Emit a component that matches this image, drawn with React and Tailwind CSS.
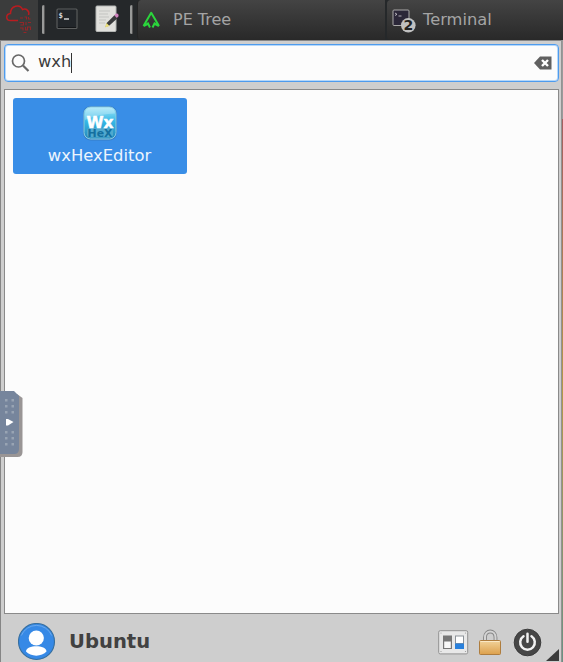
const dejavu = "font-['DejaVu_Sans',sans-serif]";

function MenuLogo() {
  return (
    <svg className="h-10 w-[38px] shrink-0" viewBox="0 0 38 40" fill="none" stroke="#b91c20" strokeWidth="1.500">
      <path d="M18 20.500h-7.500c-5 0-5-6.500 0-7 0-8 9.500-10 12-4 4-1.500 7.500 2 6 5.500" />
      <g strokeWidth="1.100" opacity=".7">
        <path d="M20 18h3M24.500 17h2v2.500M28.500 17v2h2M19.500 22.500h4v2.500h-3M26 22v3M28 22.500h3M20 28h3v2.500M25.500 27v3h2v-3h3v3M23.500 32.500h3" />
      </g>
    </svg>
  );
}

function TerminalIcon() {
  return (
    <svg className="size-[22px]" viewBox="0 0 22 22">
      <rect x="1" y="1" width="20" height="19.500" rx="1" fill="#22262a" stroke="#5d5f5f" strokeWidth="1.100" />
      <path d="M2 19.500h18" stroke="#151719" />
      <text x="2.500" y="9.500" fontSize="7.500" fontWeight="bold" fontFamily="DejaVu Sans Mono, monospace" fill="#d8d8d8">$</text>
      <path d="M8 11h5" stroke="#eee" strokeWidth="1.300" />
    </svg>
  );
}

function NotesIcon() {
  return (
    <svg className="h-[28px] w-[25px]" viewBox="0 0 25 28">
      <rect x="1" y="1" width="20" height="25.500" rx="1" fill="#e0e0dc" stroke="#b4b6b4" />
      <path d="M4 6h11M4 9h9M4 12h10M4 15h7M4 18h6" stroke="#c3c4c1" strokeWidth="1" />
      <path d="M10.500 22l1.200-4 8-8 3 3-8.300 7.500z" fill="#3b3c3d" />
      <path d="M10 22.500l1.500-4.500 3 3z" fill="#ede17a" />
      <path d="M19.300 10.300l1.500-1.500c2-.8 3.500 1 2.500 2.700l-1.500 1.500z" fill="#cf83bd" />
    </svg>
  );
}

function TreeIcon() {
  return (
    <svg className="h-[18px] w-[19px]" viewBox="0 0 19 18" fill="none" stroke="#2bd63c" strokeWidth="2" strokeLinejoin="round">
      <path d="M1.500 15L9.200 1.800 17 15M5.500 11.500l2.500 5M13 11.500l-2.500 5M1.500 15l4-2M17 15l-4-2" />
    </svg>
  );
}

function GroupedTerminalIcon() {
  return (
    <svg className="h-6 w-[25px]" viewBox="0 0 25 24">
      <rect x="1" y="1" width="16" height="15.500" rx="1" fill="#2b2738" stroke="#aaa9a8" strokeWidth="1" />
      <path d="M3 4l2 1.300L3 6.500M6.500 7h3" stroke="#d5d2d8" fill="none" strokeWidth=".8" />
      <circle cx="16.300" cy="16.300" r="7.300" fill="#c0c0c0" />
      <text x="16.300" y="21.300" textAnchor="middle" fontSize="14" fontWeight="bold" fontFamily="DejaVu Sans, sans-serif" fill="#222">2</text>
    </svg>
  );
}

function WxIcon() {
  return (
    <svg className="size-[36px]" viewBox="0 0 36 36">
      <defs>
        <linearGradient id="wxfill" x1="0" y1="0" x2="0" y2="1">
          <stop offset="0" stopColor="#a3e6f8" />
          <stop offset=".45" stopColor="#36b8e6" />
          <stop offset="1" stopColor="#2788b8" />
        </linearGradient>
      </defs>
      <rect x="1" y="1" width="34" height="34.500" rx="8" fill="#356ca5" opacity=".5" />
      <rect x="2" y="2" width="32" height="32" rx="6.500" fill="url(#wxfill)" stroke="#8acbe2" strokeWidth="1" />
      <path d="M3 9q0-6.500 6-6.500h18q6 0 6 6C24 9 14 10 3 15z" fill="#fff" opacity=".25" />
      <rect x="5" y="23" width="26" height="9.500" rx="3" fill="#50a9cf" />
      <text x="4.500" y="22.500" textLength="27" lengthAdjust="spacingAndGlyphs" fontSize="16" fontWeight="bold" fontFamily="DejaVu Sans, sans-serif" fill="#fff" stroke="#fff" strokeWidth=".5">Wx</text>
      <text x="5.500" y="32" textLength="25" lengthAdjust="spacingAndGlyphs" fontSize="10.500" fontWeight="bold" fontFamily="DejaVu Sans, sans-serif" fill="#146f9f">HeX</text>
    </svg>
  );
}

function Avatar() {
  return (
    <svg className="size-[38px]" viewBox="0 0 38 38">
      <circle cx="18.500" cy="18.500" r="18" fill="#3689e6" stroke="#376f9f" strokeWidth="1.100" />
      <path d="M3.300 12.500a16.500 16.500 0 0 1 30.400 0" fill="none" stroke="#77b1ee" strokeWidth=".8" />
      <circle cx="18.300" cy="15" r="7.600" fill="#fff" />
      <path d="M8 28.500c0-7 20.500-7 20.500 0-4.500 5.500-16 5.500-20.500 0z" fill="#fff" />
    </svg>
  );
}

function SettingsIcon() {
  return (
    <svg className="h-[25px] w-[31px]" viewBox="0 0 31 25">
      <rect x=".7" y=".7" width="29" height="23.200" rx="1.500" fill="#e8e8e8" stroke="#929292" />
      <g fill="#999"><circle cx="3" cy="3" r=".6" /><circle cx="27.500" cy="3" r=".6" /><circle cx="3" cy="21.500" r=".6" /><circle cx="27.500" cy="21.500" r=".6" /></g>
      <rect x="5" y="5.500" width="9" height="13.500" fill="#777" />
      <rect x="6.200" y="11.500" width="6.600" height="6.500" fill="#f9f9f9" />
      <rect x="17" y="5.500" width="9" height="13.500" fill="#8c9298" />
      <rect x="18" y="6.500" width="7" height="6.500" fill="#fff" />
      <rect x="17" y="13.500" width="9" height="5.500" fill="#2980dc" />
    </svg>
  );
}

function LockIcon() {
  return (
    <svg className="h-[27px] w-6" viewBox="0 0 24 27">
      <defs>
        <linearGradient id="brass" x1="0" y1="0" x2="0" y2="1">
          <stop offset="0" stopColor="#f1d39b" /><stop offset="1" stopColor="#dda04b" />
        </linearGradient>
      </defs>
      <path d="M7 13V8.500c0-8 10.500-8 10.500 0V13" fill="none" stroke="#858585" strokeWidth="3.800" />
      <path d="M7 13V8.500c0-8 10.500-8 10.500 0V13" fill="none" stroke="#d4d4d4" strokeWidth="2" />
      <rect x="1.500" y="11.500" width="21" height="14" rx="1" fill="url(#brass)" stroke="#ae7d3e" />
      <path d="M2.500 12.500h19" stroke="#fae8c4" />
    </svg>
  );
}

function PowerIcon() {
  return (
    <svg className="size-[29px]" viewBox="0 0 29 29" fill="none">
      <circle cx="14.500" cy="14.500" r="13.300" fill="#464646" stroke="#3a3a3a" />
      <path d="M10.500 8.300a7.300 7.300 0 1 0 8 0M14.500 5.800v8" stroke="#f2f2f2" strokeWidth="2.500" strokeLinecap="round" />
    </svg>
  );
}

function Divider() {
  return <div className="h-[29px] w-[3px] rounded-full border-r border-[#555] bg-[#999a99]" />;
}

function DrawerHandle() {
  return (
    <div className="absolute top-[391px] left-0 h-[67px] w-[23px]">
      <svg className="block h-[67px] w-[23px]" viewBox="0 0 23 67">
        <path d="M0 3h17l5.500 4v54q0 5-5 5H0z" fill="#999595" />
        <path d="M0 0h14l5 5v53q0 5-5 5H0z" fill="#76859c" />
        <g fill="#98a4b3">
          {[8, 14, 20, 40, 46, 52].map((y) => (
            <g key={y}><rect x="5" y={y} width="2.500" height="2.500" /><rect x="11.500" y={y} width="2.500" height="2.500" /></g>
          ))}
        </g>
        <path d="M6 28h2l5.500 3L8 34.500H6z" fill="#fff" />
      </svg>
    </div>
  );
}

export default function App() {
  return (
    <div className={`relative flex h-[662px] w-[563px] flex-col overflow-hidden bg-[#cecece] ${dejavu}`}>
      <header className="flex h-10 shrink-0 items-center bg-[#25282a] text-[16.300px] text-[#a4a4a4]">
        <div className="h-10 w-[38px] bg-[#3b3c3c]"><MenuLogo /></div>
        <div className="flex w-[99px] items-center pb-[2px] pl-1">
          <Divider />
          <div className="ml-[11px]"><TerminalIcon /></div>
          <div className="ml-[17px]"><NotesIcon /></div>
          <div className="ml-[10px]"><Divider /></div>
        </div>
        <div className="flex h-10 w-[248px] items-center rounded-l border-l border-[#242424] bg-linear-to-b from-[#444] to-[#292929] pl-[4px]">
          <div className="-mt-px"><TreeIcon /></div>
          <span className="-mt-px ml-[12px] text-[16px]">PE Tree</span>
        </div>
        <div className="ml-0.5 flex h-10 flex-1 items-center rounded-l bg-linear-to-b from-[#444] to-[#292929] pl-[5px]">
          <div className="mt-[2px]"><GroupedTerminalIcon /></div>
          <span className="ml-[6px]">Terminal</span>
        </div>
      </header>
      <main className="flex min-h-0 flex-1">
        <section className="flex min-w-0 flex-1 flex-col border-t border-l border-[#858585] pt-[3px] pr-[2px] pl-[3px]">
          <div className="flex h-[38px] shrink-0 items-center rounded-[4px] border border-[#4e9bed] bg-[#fcfcfc] px-[6px] shadow-[inset_0_0_0_1px_#b5d8fb]">
            <svg className="size-[19px]" viewBox="0 0 19 19" fill="none" stroke="#686868">
              <circle cx="7.500" cy="7" r="6" strokeWidth="1.700" /><path d="M12 11.500l5.500 5.500" strokeWidth="2.200" />
            </svg>
            <span className="ml-[8px] pb-px text-[16.300px] text-[#3d3d3d]">wxh</span>
            <span className="h-5 w-px bg-[#333]" />
            <svg className="ml-auto h-[14px] w-[18px]" viewBox="0 0 18 14">
              <path d="M0 7L6 .5h11.500v13H6z" fill="#606060" />
              <path d="M8 4l6 6M14 4l-6 6" stroke="#fff" strokeWidth="2.400" />
            </svg>
          </div>
          <div className="mt-[7px] h-[525px] border border-[#8a8a8a] bg-[#fcfcfc] pt-[7.500px] pl-[7.500px]">
            <div className="flex h-[76px] w-[174px] flex-col items-center rounded-[3px] bg-[#398ee7] pt-[7px] text-[16.400px] text-[#edf5fd]">
              <WxIcon />
              <span className="mt-[3px] leading-[24px]">wxHexEditor</span>
            </div>
          </div>
          <footer className="flex flex-1 items-center pt-[7px] pl-[14px]">
            <Avatar />
            <span className="ml-[13px] text-[19.600px] font-bold text-[#414141]">Ubuntu</span>
            <div className="ml-auto flex items-center pt-[2px] pr-[17px]">
              <SettingsIcon />
              <div className="ml-[9px]"><LockIcon /></div>
              <div className="ml-[11px]"><PowerIcon /></div>
            </div>
          </footer>
        </section>
        <aside className="flex w-[2px] flex-col border-l border-[#929292]">
          <div className="h-[79px] bg-[#999b9b]" />
          <div className="flex-1 bg-linear-to-b from-[#a65f60] via-[#b49a48] to-[#699283]" />
        </aside>
      </main>
      <DrawerHandle />
      <svg className="absolute top-[649px] left-[546px] h-3 w-[13px]" viewBox="0 0 13 12"><path d="M13 0v12H0z" fill="#3b3b3b" /></svg>
    </div>
  );
}
